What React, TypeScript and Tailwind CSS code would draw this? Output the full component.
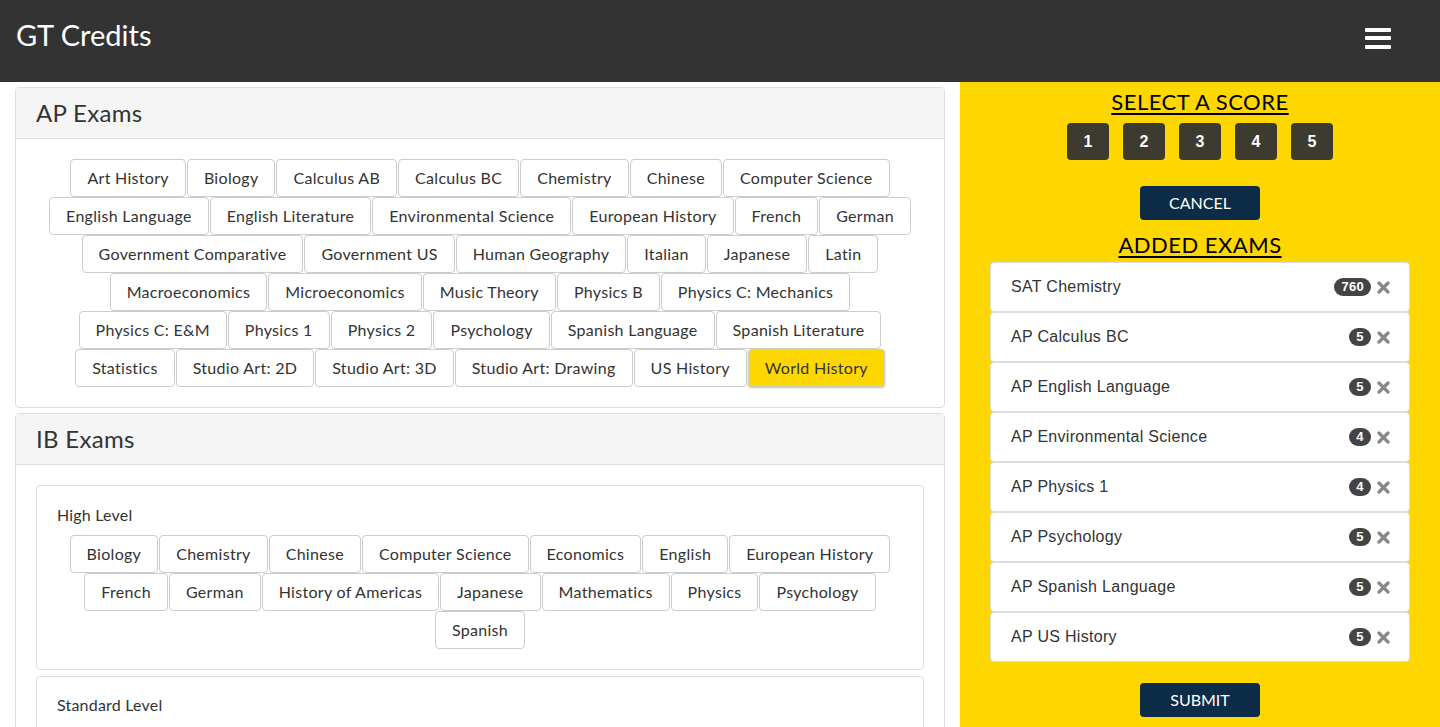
import { useState } from 'react';

const apRows = [
  ['Art History', 'Biology', 'Calculus AB', 'Calculus BC', 'Chemistry', 'Chinese', 'Computer Science'],
  ['English Language', 'English Literature', 'Environmental Science', 'European History', 'French', 'German'],
  ['Government Comparative', 'Government US', 'Human Geography', 'Italian', 'Japanese', 'Latin'],
  ['Macroeconomics', 'Microeconomics', 'Music Theory', 'Physics B', 'Physics C: Mechanics'],
  ['Physics C: E&M', 'Physics 1', 'Physics 2', 'Psychology', 'Spanish Language', 'Spanish Literature'],
  ['Statistics', 'Studio Art: 2D', 'Studio Art: 3D', 'Studio Art: Drawing', 'US History', 'World History'],
];

const ibHighRows = [
  ['Biology', 'Chemistry', 'Chinese', 'Computer Science', 'Economics', 'English', 'European History'],
  ['French', 'German', 'History of Americas', 'Japanese', 'Mathematics', 'Physics', 'Psychology'],
  ['Spanish'],
];

const added = [
  { name: 'SAT Chemistry', score: '760' },
  { name: 'AP Calculus BC', score: '5' },
  { name: 'AP English Language', score: '5' },
  { name: 'AP Environmental Science', score: '4' },
  { name: 'AP Physics 1', score: '4' },
  { name: 'AP Psychology', score: '5' },
  { name: 'AP Spanish Language', score: '5' },
  { name: 'AP US History', score: '5' },
];

const ExamButton = ({ label, active }: { label: string; active?: boolean }) => (
  <button
    className={
      'h-[38px] px-4 border border-[#ccc] rounded-[4px] text-[16px] tracking-[0.3px] text-[#333] whitespace-nowrap ' +
      (active ? 'bg-[#ffd700] shadow-[0_1px_2px_rgba(0,0,0,0.25)]' : 'bg-white')
    }
  >
    {label}
  </button>
);

const ButtonRows = ({ rows, selected }: { rows: string[][]; selected: string }) => (
  <div className="flex flex-col items-center">
    {rows.map((row, i) => (
      <div key={i} className="flex justify-center gap-px">
        {row.map((label) => (
          <ExamButton key={label} label={label} active={label === selected} />
        ))}
      </div>
    ))}
  </div>
);

const Panel = ({ title, children }: { title: string; children: React.ReactNode }) => (
  <div className="border border-[#ddd] rounded-[4px] mb-[5px] bg-white">
    <div className="h-[51px] bg-[#f5f5f5] border-b border-[#ddd] flex items-center px-5 text-[24px] tracking-[0.3px] text-[#333]">
      {title}
    </div>
    <div className="p-5">{children}</div>
  </div>
);

const TimesIcon = () => (
  <svg width="13" height="13" viewBox="0 0 13 13">
    <path d="M2 2 L11 11 M11 2 L2 11" stroke="#888" strokeWidth="3.2" strokeLinecap="round" />
  </svg>
);

export default function App() {
  const [score, setScore] = useState<number | null>(null);

  return (
    <div className="h-[727px] overflow-hidden bg-white font-['Lato',sans-serif]">
      {/* Navbar */}
      <div className="h-[82px] bg-[#333] flex items-center justify-between pl-4 pr-[49px]">
        <span className="text-white text-[29px] -mt-[12px]">GT Credits</span>
        <div className="flex flex-col gap-[4.5px] -mt-[6px]">
          <span className="block w-[26px] h-[4px] bg-white rounded-[1px]" />
          <span className="block w-[26px] h-[4px] bg-white rounded-[1px]" />
          <span className="block w-[26px] h-[4px] bg-white rounded-[1px]" />
        </div>
      </div>

      <div className="flex">
        {/* Left: exam lists */}
        <div className="w-[960px] px-[15px] pt-[5px]">
          <Panel title="AP Exams">
            <ButtonRows rows={apRows} selected="World History" />
          </Panel>
          <Panel title="IB Exams">
            <div className="border border-[#ddd] rounded-[4px] px-5 pt-[19px] pb-5 mb-[6px]">
              <div className="text-[16px] tracking-[0.2px] text-[#333] leading-[20px] mb-[10px]">High Level</div>
              <ButtonRows rows={ibHighRows} selected="" />
            </div>
            <div className="border border-[#ddd] rounded-[4px] px-5 pt-[18px] pb-5">
              <div className="text-[16px] tracking-[0.2px] text-[#333] leading-[20px]">Standard Level</div>
            </div>
          </Panel>
        </div>

        {/* Right: score + added exams */}
        <div className="w-[480px] h-[645px] bg-[#ffd700] flex flex-col items-center pt-[7px]">
          <div className="text-[22px] leading-[26px] tracking-[0.5px] text-black underline underline-offset-[3px]">SELECT A SCORE</div>
          <div className="flex gap-[14px] mt-[8px]">
            {[1, 2, 3, 4, 5].map((n) => (
              <button
                key={n}
                onClick={() => setScore(n)}
                className={
                  'w-[42px] h-[37px] rounded-[4px] text-white font-bold text-[16px] font-["Liberation_Sans",sans-serif] ' +
                  (score === n ? 'bg-[#222]' : 'bg-[#3d3a30]')
                }
              >
                {n}
              </button>
            ))}
          </div>
          <button className="mt-[26px] w-[120px] h-[34px] rounded-[4px] bg-[#0d2c47] text-white text-[16px]">
            CANCEL
          </button>
          <div className="mt-[12px] text-[22px] leading-[26px] tracking-[0.5px] text-black underline underline-offset-[3px]">ADDED EXAMS</div>
          <div className="mt-[4px] w-[420px] flex flex-col font-['Liberation_Sans',sans-serif]">
            {added.map((e) => (
              <div
                key={e.name}
                className="h-[50px] bg-white border border-[#ddd] rounded-[4px] flex items-center pl-5 pr-[19px] text-[16px] tracking-[0.3px] text-[#333]"
              >
                <span className="flex-1">{e.name}</span>
                <span className="h-[18px] min-w-[22px] px-[7px] rounded-full bg-[#444] text-white text-[13px] font-bold flex items-center justify-center">
                  {e.score}
                </span>
                <span className="ml-[6px] flex items-center">
                  <TimesIcon />
                </span>
              </div>
            ))}
          </div>
          <button className="mt-[21px] w-[120px] h-[34px] rounded-[4px] bg-[#0d2c47] text-white text-[16px]">
            SUBMIT
          </button>
        </div>
      </div>
    </div>
  );
}
